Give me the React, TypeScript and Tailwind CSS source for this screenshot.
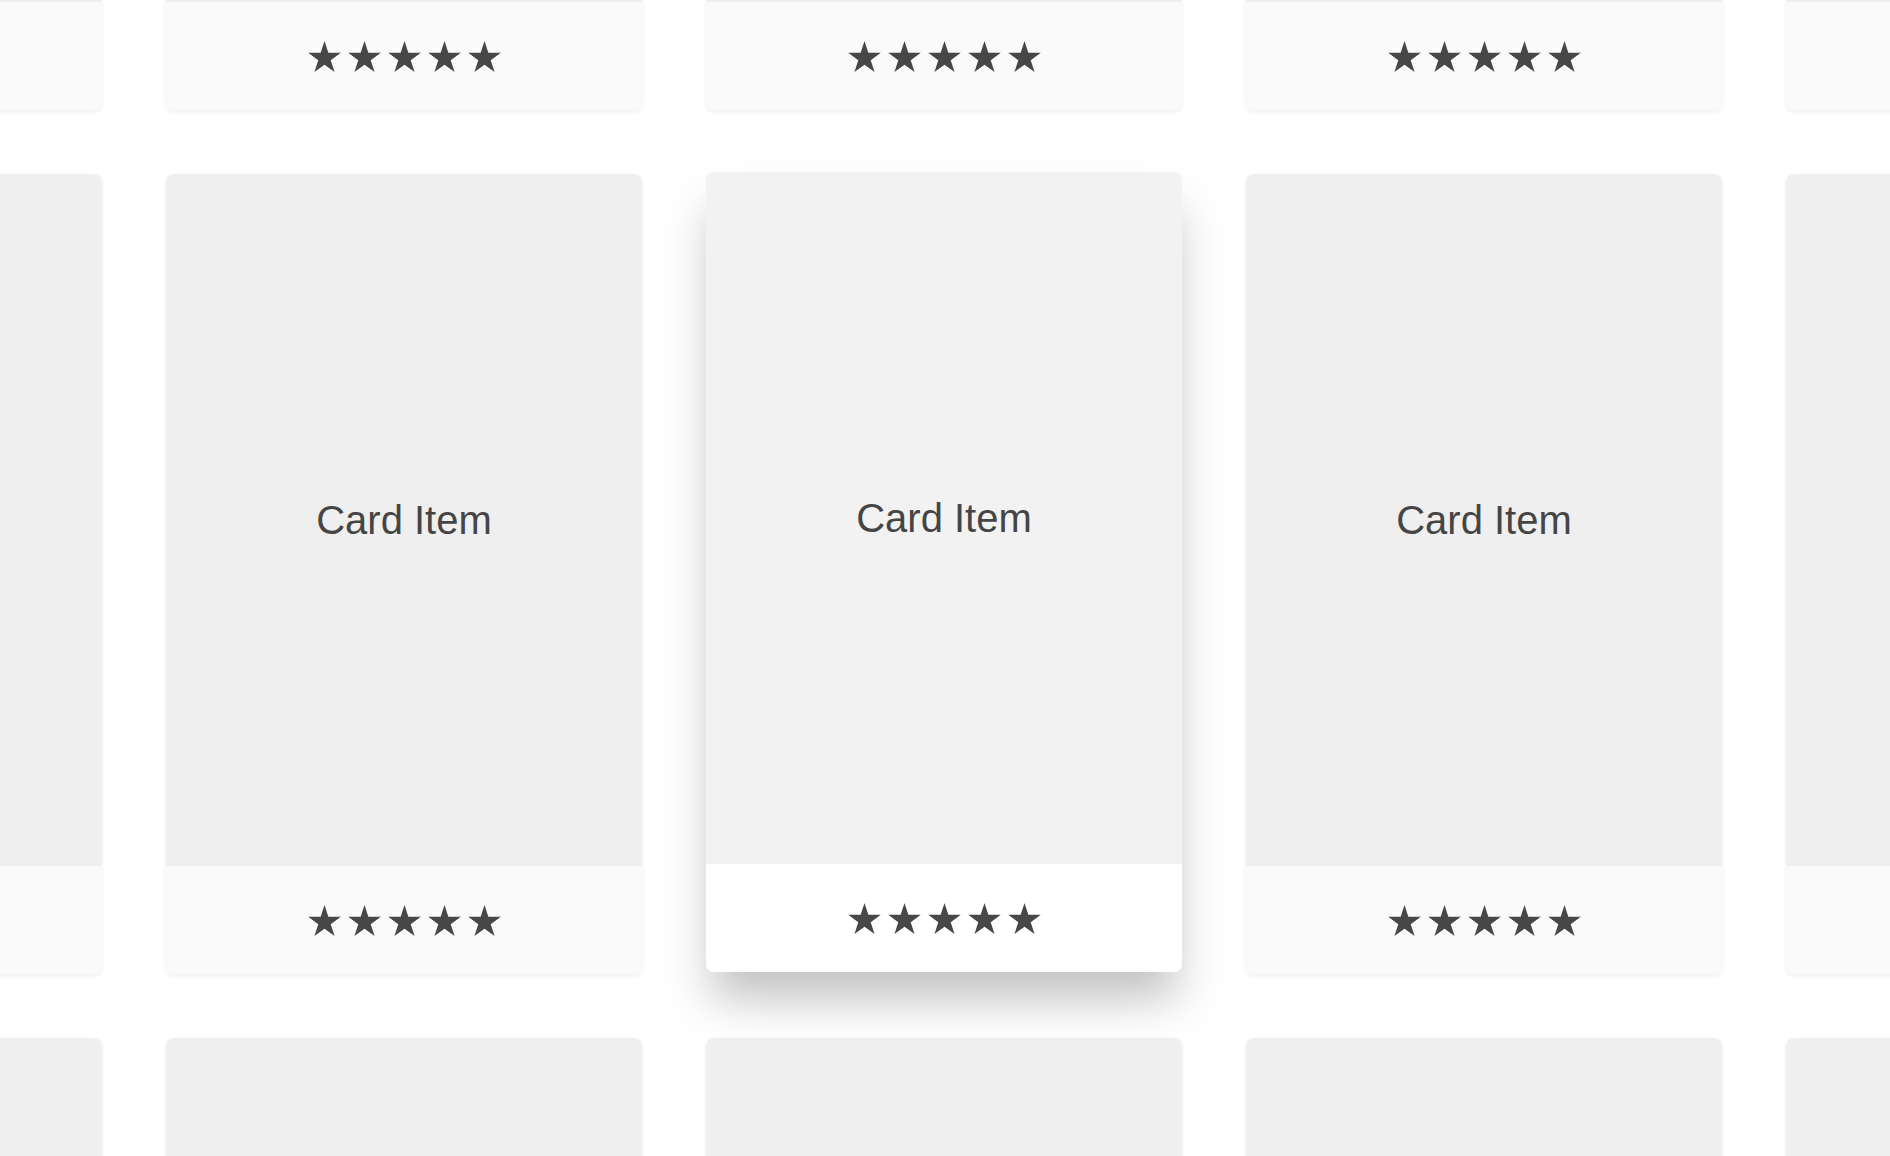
const COLS = 5
const ROWS = 3
// middle row, middle visible column is the hovered card
const HOVER = { row: 1, col: 2 }

function Star() {
  return (
    <svg viewBox="2.45 0 95.1 90.45" className="h-[31px] w-[33px] fill-[#474747]">
      <polygon points="50,0 61.23,34.55 97.55,34.55 68.17,55.9 79.39,90.45 50,69.1 20.61,90.45 31.83,55.9 2.45,34.55 38.77,34.55" />
    </svg>
  )
}

function Stars() {
  return (
    <div className="flex items-center gap-[7px]">
      {[0, 1, 2, 3, 4].map((i) => (
        <Star key={i} />
      ))}
    </div>
  )
}

function Card({ hovered }: { hovered: boolean }) {
  return (
    <div
      className={`flex h-[800px] flex-col overflow-hidden rounded-lg ${
        hovered
          ? 'relative z-10 -translate-y-[2px] shadow-[0_32px_48px_-6px_rgba(0,0,0,0.25)]'
          : 'shadow-[0_2px_5px_rgba(0,0,0,0.07)]'
      }`}
    >
      <div
        className={`flex h-[692px] items-center justify-center ${hovered ? 'bg-[#f2f2f2]' : 'bg-[#efefef]'}`}
      >
        <span className="text-[40px] leading-none text-[#454545] [font-family:'Liberation_Sans',Arial,sans-serif]">
          Card Item
        </span>
      </div>
      <div className={`flex flex-1 items-center justify-center ${hovered ? 'bg-white' : 'bg-[#fafafa]'}`}>
        <Stars />
      </div>
    </div>
  )
}

export default function App() {
  return (
    <div className="h-[1156px] w-full overflow-hidden bg-white">
      <div className="ml-[-374px] mt-[-690px] grid w-max grid-cols-[repeat(5,476px)] gap-16">
        {Array.from({ length: ROWS * COLS }).map((_, i) => {
          const row = Math.floor(i / COLS)
          const col = i % COLS
          return <Card key={i} hovered={row === HOVER.row && col === HOVER.col} />
        })}
      </div>
    </div>
  )
}
